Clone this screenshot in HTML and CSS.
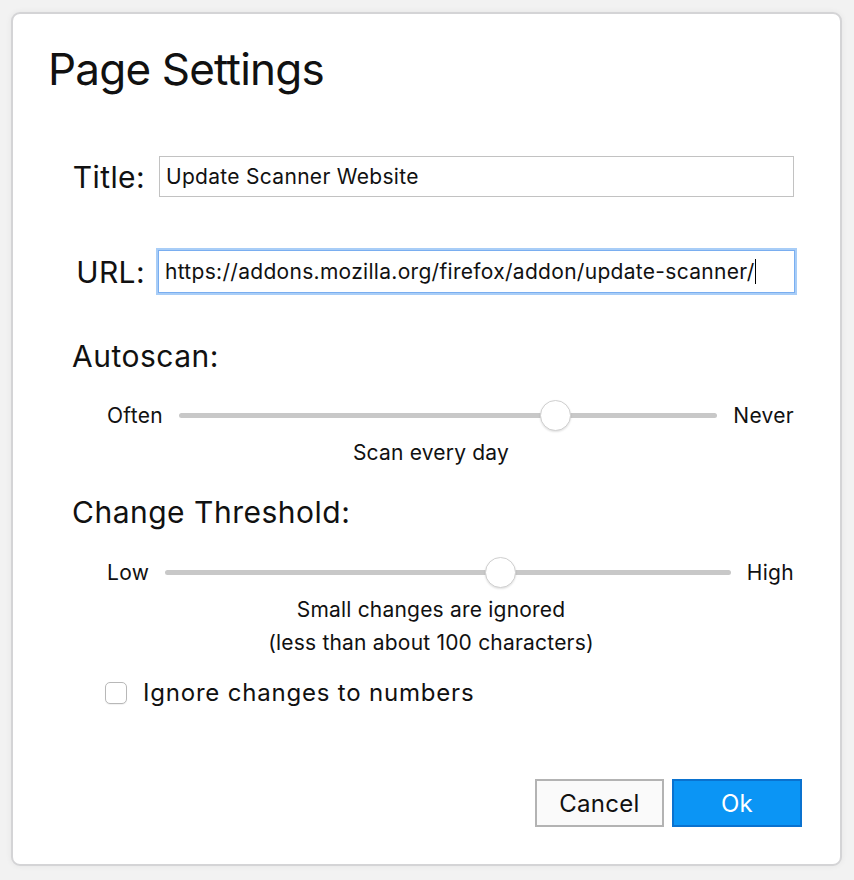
FILE: index.html
```html
<!DOCTYPE html>
<html>
<head>
<meta charset="utf-8">
<link rel="stylesheet" href="styles.css">
</head>
<body>
<div class="dialog">
  <h1 class="title">Page Settings</h1>
  <div class="field">
    <label class="field-label">Title:</label>
    <div class="input">Update Scanner Website</div>
  </div>
  <div class="field field-url">
    <label class="field-label">URL:</label>
    <div class="input focused">https://addons.mozilla.org/firefox/addon/update-scanner/<span class="caret"></span></div>
  </div>
  <h2 class="heading heading-autoscan">Autoscan:</h2>
  <div class="slider slider-autoscan">
    <span class="end">Often</span>
    <div class="track"><span class="thumb" style="left: 70%"></span></div>
    <span class="end">Never</span>
  </div>
  <p class="caption caption-autoscan">Scan every day</p>
  <h2 class="heading heading-threshold">Change Threshold:</h2>
  <div class="slider slider-threshold">
    <span class="end">Low</span>
    <div class="track"><span class="thumb" style="left: 59.3%"></span></div>
    <span class="end">High</span>
  </div>
  <p class="caption caption-threshold">Small changes are ignored<br>(less than about 100 characters)</p>
  <div class="check-row">
    <span class="checkbox"></span>
    <span class="check-label">Ignore changes to numbers</span>
  </div>
  <div class="buttons">
    <button class="btn btn-cancel">Cancel</button>
    <button class="btn btn-ok">Ok</button>
  </div>
</div>
</body>
</html>
```
FILE: styles.css
```css
html, body {
  margin: 0;
  padding: 0;
  background: #f2f2f2;
}
body {
  font-family: Inter, "Liberation Sans", sans-serif;
  color: #111;
  width: 854px;
  height: 880px;
  overflow: hidden;
}
.dialog {
  box-sizing: border-box;
  margin: 12px 0 0 11px;
  width: 831px;
  height: 854px;
  background: #fff;
  border: 2px solid #d4d4d6;
  border-radius: 9px;
  box-shadow: 0 0 6px rgba(0,0,0,0.06);
  padding: 0 46px 0 59px;
  display: flex;
  flex-direction: column;
}
.title {
  margin: 25px 0 0 -24px;
  font-size: 44px;
  font-weight: 400;
  line-height: 60px;
  letter-spacing: -0.8px;
}
.field {
  display: flex;
  align-items: center;
  margin-top: 57px;
}
.field-url {
  margin-top: 53px;
}
.field-label {
  width: 73px;
  text-align: right;
  font-size: 30px;
  margin-right: 14px;
  letter-spacing: 0.4px;
}
.input {
  flex: 1;
  box-sizing: border-box;
  height: 41px;
  border: 1px solid #c2c2c2;
  padding: 0 6px;
  font-size: 21px;
  letter-spacing: 0.3px;
  line-height: 39px;
  white-space: nowrap;
  overflow: hidden;
}
.focused {
  border: 1px solid #7aaef0;
  box-shadow: 0 0 0 2px #a8cdf7;
  margin-left: -1px;
  margin-right: -1px;
  height: 43px;
  line-height: 41px;
}
.caret {
  display: inline-block;
  width: 1px;
  height: 25px;
  background: #000;
  vertical-align: -5px;
}
.heading {
  margin: 0;
  font-size: 30px;
  font-weight: 400;
  line-height: 36px;
  letter-spacing: 0.5px;
}
.heading-autoscan { margin-top: 45px; }
.heading-threshold { margin-top: 25px; }
.slider {
  display: flex;
  align-items: center;
  gap: 16px;
  padding-left: 35px;
  height: 32px;
  font-size: 21px;
  letter-spacing: 0.3px;
}
.slider-autoscan { margin-top: 25px; }
.slider-threshold { margin-top: 26px; }
.track {
  flex: 1;
  height: 5px;
  border-radius: 3px;
  background: #c8c8c8;
  position: relative;
}
.thumb {
  position: absolute;
  top: 50%;
  width: 31px;
  height: 31px;
  margin: -15.5px 0 0 -15.5px;
  box-sizing: border-box;
  border-radius: 50%;
  background: #fff;
  border: 1px solid #d0d0d0;
  box-shadow: 0 1px 2px rgba(0,0,0,0.12);
}
.caption {
  margin: 0;
  text-align: center;
  font-size: 21px;
  letter-spacing: 0.2px;
  line-height: 33px;
  padding-right: 4px;
}
.caption-autoscan { margin-top: 5px; }
.caption-threshold { margin-top: 5px; }
.check-row {
  display: flex;
  align-items: center;
  margin: 19px 0 0 33px;
}
.checkbox {
  box-sizing: border-box;
  width: 22px;
  height: 22px;
  border: 1px solid #b8b8b8;
  border-radius: 5px;
  background: #fff;
  box-shadow: 0 1px 1px rgba(0,0,0,0.06);
  margin-right: 16px;
}
.check-label {
  font-size: 24px;
  letter-spacing: 0.8px;
}
.buttons {
  display: flex;
  justify-content: flex-end;
  gap: 8px;
  margin-top: auto;
  margin-bottom: 37px;
  margin-right: -8px;
}
.btn {
  box-sizing: border-box;
  width: 130px;
  height: 48px;
  font-family: Inter, "Liberation Sans", sans-serif;
  font-size: 24px;
  letter-spacing: 0.3px;
  border-radius: 0;
  padding: 0;
}
.btn-cancel {
  width: 129px;
  background: #fafafa;
  border: 2px solid #b3b3b3;
  color: #111;
}
.btn-ok {
  background: #0b95f5;
  border: 2px solid #0a72cf;
  color: #fff;
}
```
